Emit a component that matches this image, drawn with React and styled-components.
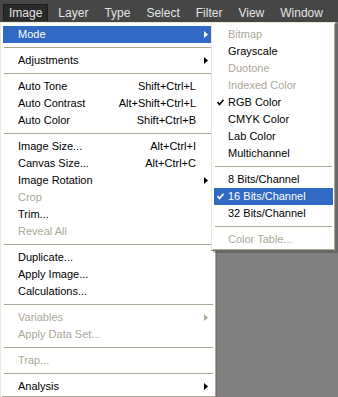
import React from 'react';
import styled, { createGlobalStyle } from 'styled-components';

const mainItems = [
  { label: 'Mode', arrow: true, active: true },
  'sep',
  { label: 'Adjustments', arrow: true },
  'sep',
  { label: 'Auto Tone', keys: 'Shift+Ctrl+L' },
  { label: 'Auto Contrast', keys: 'Alt+Shift+Ctrl+L' },
  { label: 'Auto Color', keys: 'Shift+Ctrl+B' },
  'sep',
  { label: 'Image Size...', keys: 'Alt+Ctrl+I' },
  { label: 'Canvas Size...', keys: 'Alt+Ctrl+C' },
  { label: 'Image Rotation', arrow: true },
  { label: 'Crop', disabled: true },
  { label: 'Trim...' },
  { label: 'Reveal All', disabled: true },
  'sep',
  { label: 'Duplicate...' },
  { label: 'Apply Image...' },
  { label: 'Calculations...' },
  'sep',
  { label: 'Variables', disabled: true, arrow: true },
  { label: 'Apply Data Set...', disabled: true },
  'sep',
  { label: 'Trap...', disabled: true },
  'sep',
  { label: 'Analysis', arrow: true },
];

const modeItems = [
  { label: 'Bitmap', disabled: true },
  { label: 'Grayscale' },
  { label: 'Duotone', disabled: true },
  { label: 'Indexed Color', disabled: true },
  { label: 'RGB Color', checked: true },
  { label: 'CMYK Color' },
  { label: 'Lab Color' },
  { label: 'Multichannel' },
  'sep',
  { label: '8 Bits/Channel' },
  { label: '16 Bits/Channel', checked: true, active: true },
  { label: '32 Bits/Channel' },
  'sep',
  { label: 'Color Table...', disabled: true },
];

const barItems = ['Image', 'Layer', 'Type', 'Select', 'Filter', 'View', 'Window'];

function textColor(p) {
  if (p.$active) return '#ffffff';
  if (p.$disabled) return '#aca899';
  return '#000000';
}

function Arrow({ color }) {
  return (
    <svg width='4' height='7' viewBox='0 0 4 7'>
      <path d='M0 0 L4 3.5 L0 7 Z' fill={color} />
    </svg>
  );
}

function Check({ color }) {
  return (
    <svg width='7' height='7' viewBox='0 0 7 7'>
      <path d='M0.5 3 L2.5 5.5 L6.5 0.8' fill='none' stroke={color} strokeWidth='1.6' />
    </svg>
  );
}

export default function App() {
  return (
    <>
      <GlobalStyle />
      <Page>
        <MenuBar>
          {barItems.map((name, i) => (
            <BarItem key={name} $open={i === 0}>
              {name}
            </BarItem>
          ))}
        </MenuBar>
        <Body>
          <Panel $width={217}>
            {mainItems.map((it, i) =>
              it === 'sep' ? (
                <Separator key={i} />
              ) : (
                <Row key={i} $active={it.active} $disabled={it.disabled} $indent={15}>
                  <Label>{it.label}</Label>
                  {it.keys && <Keys>{it.keys}</Keys>}
                  <ArrowCell>
                    {it.arrow && (
                      <Arrow color={it.active ? '#fff' : it.disabled ? '#aca899' : '#000'} />
                    )}
                  </ArrowCell>
                </Row>
              )
            )}
          </Panel>
          <SubMenu $width={125}>
            {modeItems.map((it, i) =>
              it === 'sep' ? (
                <Separator key={i} />
              ) : (
                <Row key={i} $active={it.active} $disabled={it.disabled} $indent={0}>
                  <CheckCell>{it.checked && <Check color={it.active ? '#fff' : '#000'} />}</CheckCell>
                  <Label>{it.label}</Label>
                </Row>
              )
            )}
          </SubMenu>
        </Body>
      </Page>
    </>
  );
}

const GlobalStyle = createGlobalStyle`
  body {
    margin: 0;
    background: #808080;
    font-family: "Liberation Sans", Arial, sans-serif;
  }
`;

const Page = styled.div`
  width: 338px;
  height: 397px;
  overflow: hidden;
  background: #808080;
`;

const MenuBar = styled.div`
  display: flex;
  align-items: flex-end;
  gap: 4px;
  height: 22px;
  box-sizing: border-box;
  padding: 0 0 1px 3px;
  background: #464646;
`;

const BarItem = styled.div`
  height: 17px;
  line-height: 16px;
  padding: 0 5px;
  box-sizing: border-box;
  font-size: 12px;
  color: #e4e4e4;
  background: ${(p) => (p.$open ? '#2a2a2a' : 'transparent')};
  border: 1px solid ${(p) => (p.$open ? '#1f1f1f' : 'transparent')};
  border-bottom: none;
`;

const Body = styled.div`
  position: relative;
  display: flex;
`;

const Panel = styled.div`
  width: ${(p) => p.$width}px;
  box-sizing: border-box;
  padding: 3px 2px 2px;
  background: #ffffff;
  border: 1px solid;
  border-color: #ece9d8 #716f64 #716f64 #ece9d8;
  box-shadow: inset 1px 1px #ffffff, inset -1px -1px #aca899;
  font-size: 11px;
`;

const SubMenu = styled(Panel)`
  position: absolute;
  top: 0;
  left: 211px;
  box-shadow: inset 1px 1px #ffffff, inset -1px -1px #aca899, 2px 2px 0 rgba(0, 0, 0, 0.18);
`;

const Row = styled.div`
  display: flex;
  align-items: center;
  height: 17px;
  padding-left: ${(p) => p.$indent}px;
  color: ${textColor};
  background: ${(p) => (p.$active ? '#316ac5' : 'transparent')};
  white-space: nowrap;
`;

const Label = styled.span`
  flex: 1;
  line-height: 17px;
`;

const Keys = styled.span`
  line-height: 17px;
`;

const ArrowCell = styled.span`
  width: 17px;
  display: flex;
  justify-content: center;
  padding-left: 1px;
`;

const CheckCell = styled.span`
  width: 14px;
  display: flex;
  padding-left: 3px;
  box-sizing: border-box;
`;

const Separator = styled.div`
  height: 9px;
  display: flex;
  align-items: center;
  padding: 0 1px;

  &::after {
    content: '';
    flex: 1;
    height: 1px;
    background: #aca899;
  }
`;
